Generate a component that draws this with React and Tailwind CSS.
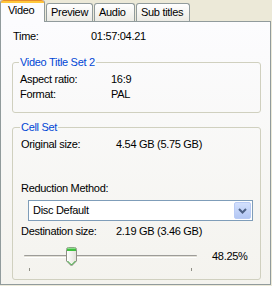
import React from 'react'

const font = "font-['Liberation_Sans',Arial,sans-serif]"

function Tab({ label, active, width }) {
  if (active) {
    return (
      <div
        className={`relative z-10 -mb-px h-[22px] ${width} flex flex-col rounded-t-[3px] border-x border-[#919b9c] bg-[#fcfcfe]`}
      >
        <div className="h-[3px] rounded-t-[3px] border-t border-[#e68b2c] bg-[#ffc83c]" />
        <div className="pl-[7px] pt-[1px] leading-[13px]">{label}</div>
      </div>
    )
  }
  return (
    <div
      className={`h-[18px] ${width} rounded-t-[3px] border-x border-t border-[#919b9c] bg-gradient-to-b from-white to-[#ecebe5] pl-[4px] pt-[2px] leading-[13px]`}
    >
      {label}
    </div>
  )
}

function Row({ label, value, labelWidth, className = '' }) {
  return (
    <div className={`flex h-[13px] leading-[13px] ${className}`}>
      <div className={labelWidth}>{label}</div>
      <div>{value}</div>
    </div>
  )
}

function SliderThumb() {
  return (
    <svg width="11" height="20" viewBox="0 0 11 20" className="absolute left-[42px] top-[0px]">
      <defs>
        <linearGradient id="tb" x1="0" y1="0" x2="1" y2="0">
          <stop offset="0" stopColor="#ffffff" />
          <stop offset="1" stopColor="#e3e2da" />
        </linearGradient>
      </defs>
      <path d="M0.5 2.5 Q0.5 0.5 2.5 0.5 H8.5 Q10.5 0.5 10.5 2.5 V14 L5.5 19 L0.5 14 Z" fill="url(#tb)" stroke="#8f8f86" />
      <path d="M1 1.5 H10 V4 H1 Z" fill="#3fbf3f" />
      <path d="M1.5 1.2 H9.5" stroke="#86e086" />
      <path d="M1.5 14 L5.5 18 L9.5 14" fill="none" stroke="#2ea52e" />
    </svg>
  )
}

export default function App() {
  return (
    <div className={`w-[272px] h-[286px] bg-[#ece9d8] text-[11px] tracking-[-0.3px] text-black ${font}`}>
      <div className="flex h-[21px] items-end">
        <Tab label="Video" active width="w-[45px]" />
        <div className="ml-[1px]">
          <Tab label="Preview" width="w-[47px]" />
        </div>
        <div className="ml-[1px]">
          <Tab label="Audio" width="w-[41px]" />
        </div>
        <div className="ml-[1px]">
          <Tab label="Sub titles" width="w-[54px]" />
        </div>
      </div>

      <div className="h-[264px] w-[271px] border border-[#919b9c] bg-gradient-to-b from-[#fcfcfe] to-[#f4f3ee] pl-[11px]">
        <Row label="Time:" value="01:57:04.21" labelWidth="w-[79px] pl-[1px]" className="mt-[8px]" />

        <fieldset className="mt-[13px] w-[249px] rounded-[3px] border border-[#d0d0bf] pl-[7px] pt-[4px] pb-[11px]">
          <legend className="-ml-px px-[1px] leading-[13px] text-[#0046d5]">Video Title Set 2</legend>
          <Row label="Aspect ratio:" value="16:9" labelWidth="w-[91px]" />
          <Row label="Format:" value="PAL" labelWidth="w-[91px]" className="mt-[2px]" />
        </fieldset>

        <fieldset className="mt-[8px] w-[249px] rounded-[3px] border border-[#d0d0bf] pl-[8px] pt-[4px] pb-[8px]">
          <legend className="-ml-px px-[1px] leading-[13px] text-[#0046d5]">Cell Set</legend>
          <Row label="Original size:" value="4.54 GB (5.75 GB)" labelWidth="w-[95px]" />
          <div className="mt-[31px] h-[13px] leading-[13px]">Reduction Method:</div>

          <div className="mt-[5px] ml-[7px] flex h-[21px] w-[225px] items-center border border-[#7f9db9] bg-white pl-[4px] pr-[1px]">
            <div className="flex-1 leading-[13px]">Disc Default</div>
            <div className="flex h-[17px] w-[17px] items-center justify-center rounded-[2px] border border-[#b9cbf5] bg-gradient-to-b from-[#d3e0fd] to-[#b3c7f4]">
              <svg width="9" height="6" viewBox="0 0 9 6">
                <path d="M1 1 L4.5 4.5 L8 1" fill="none" stroke="#4d6185" strokeWidth="2" />
              </svg>
            </div>
          </div>

          <Row label="Destination size:" value="2.19 GB (3.46 GB)" labelWidth="w-[95px]" className="mt-[4px]" />

          <div className="mt-[9px] flex items-start">
            <div className="relative ml-[3px] h-[24px] w-[173px]">
              <div className="mt-[8px] h-[3px] rounded-[1px] border-t border-[#9d9c99] border-b border-b-white bg-[#e2e0d6]" />
              <div className="mt-[10px] flex justify-between px-[5px]">
                <div className="h-[3px] w-px bg-[#8f8f86]" />
                <div className="h-[3px] w-px bg-[#8f8f86]" />
              </div>
              <SliderThumb />
            </div>
            <div className="ml-[15px] mt-[3px] leading-[13px]">48.25%</div>
          </div>
        </fieldset>
      </div>
    </div>
  )
}
